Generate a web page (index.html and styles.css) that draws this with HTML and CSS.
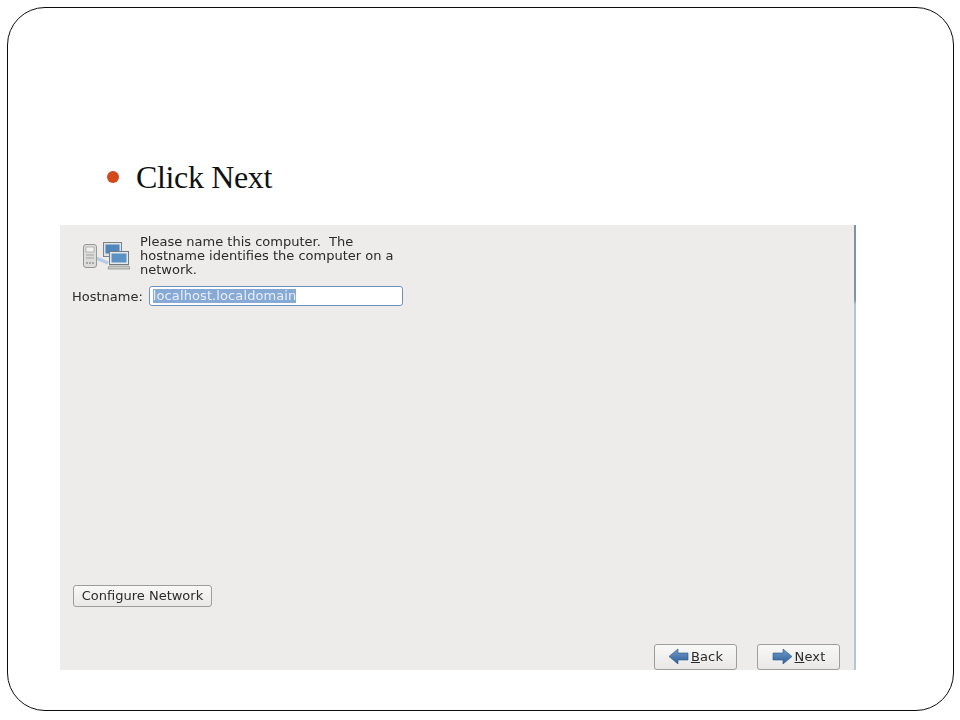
FILE: index.html
```html
<!DOCTYPE html>
<html lang="en">
<head>
<meta charset="utf-8">
<title>Click Next</title>
<link rel="stylesheet" href="styles.css">
</head>
<body>
<main class="slide">
  <ul class="bullets">
    <li class="bullet"><span class="dot"></span><span>Click Next</span></li>
  </ul>
  <section class="installer">
    <div class="content">
      <div class="intro">
        <svg class="net-icon" width="48" height="30" viewBox="0 0 48 30" aria-hidden="true">
          <path d="M14 17 L26 22" stroke="#b4cce6" stroke-width="3" fill="none"/>
          <rect x="1.5" y="3.5" width="13" height="23" rx="2.5" fill="#dcdcda" stroke="#979896"/>
          <rect x="4" y="6" width="8" height="5" fill="#f2f2f0" stroke="#a2a2a0" stroke-width=".7"/>
          <path d="M4 14h8M4 17h8" stroke="#a3a4a2"/>
          <path d="M4 22h2M7 22h2M10 22h2" stroke="#959694" stroke-width="1.5"/>
          <rect x="21.5" y="1.5" width="18" height="14" fill="#dfe3e6" stroke="#7c8386"/>
          <rect x="23.5" y="3.5" width="14" height="9" fill="#4f86bc"/>
          <rect x="27.5" y="10.5" width="19" height="13" fill="#e6e9eb" stroke="#747b7e"/>
          <rect x="29.5" y="12.5" width="15" height="9" fill="#5a92c6"/>
          <path d="M27 25h20l1 3H26z" fill="#c9cbc9" stroke="#868987" stroke-width=".7"/>
        </svg>
        <p class="intro-text">Please name this computer.&nbsp; The hostname identifies the computer on a network.</p>
      </div>
      <div class="host-row">
        <label class="host-label" for="host">Hostname:</label>
        <div class="host-input" id="host"><span class="selected">localhost.localdomain</span></div>
      </div>
      <div class="spacer"></div>
      <button class="btn btn-config" type="button">Configure Network</button>
    </div>
    <div class="nav">
      <button class="btn btn-nav" type="button">
        <svg width="21" height="17" viewBox="0 0 21 17" aria-hidden="true"><defs><linearGradient id="arrowBack" x1="0" y1="0" x2="0" y2="1"><stop offset="0" stop-color="#6f9ccc"/><stop offset="1" stop-color="#2f5f97"/></linearGradient></defs><path d="M1 8.5 L10 1 V5 H20 V12 H10 V16 Z" fill="url(#arrowBack)" stroke="#2c5688" stroke-width=".6"/></svg>
        <span class="nav-label"><u>B</u>ack</span>
      </button>
      <button class="btn btn-nav" type="button">
        <svg width="21" height="17" viewBox="0 0 21 17" aria-hidden="true"><defs><linearGradient id="arrowNext" x1="0" y1="0" x2="0" y2="1"><stop offset="0" stop-color="#6f9ccc"/><stop offset="1" stop-color="#2f5f97"/></linearGradient></defs><path d="M20 8.5 L11 1 V5 H1 V12 H11 V16 Z" fill="url(#arrowNext)" stroke="#2c5688" stroke-width=".6"/></svg>
        <span class="nav-label"><u>N</u>ext</span>
      </button>
    </div>
  </section>
</main>
</body>
</html>
```

FILE: styles.css
```css
* { box-sizing: border-box; }

html, body {
  margin: 0;
  height: 720px;
  background: #fff;
  overflow: hidden;
}

.slide {
  margin: 7px 6px 0 7px;
  width: 947px;
  height: 704px;
  border: 1.5px solid #0c0c0c;
  border-radius: 38px;
  padding-top: 148px;
  padding-left: 52px;
}

.bullets {
  list-style: none;
  margin: 0;
  padding: 0 0 0 47px;
}

.bullet {
  display: flex;
  align-items: center;
  gap: 17px;
  height: 42px;
  font-family: "Liberation Serif", "Times New Roman", serif;
  font-size: 32px;
  letter-spacing: -0.35px;
  color: #111;
}

.dot {
  width: 12px;
  height: 12px;
  border-radius: 50%;
  background: #d2491c;
}

.installer {
  margin-top: 27px;
  width: 796px;
  height: 445px;
  background: #edecea;
  border-right: 2px solid;
  border-image: linear-gradient(#7d94ac 0, #7d94ac 17%, #b3c6d9 18%, #b3c6d9 100%) 1;
  display: flex;
  flex-direction: column;
  font-family: "DejaVu Sans", sans-serif;
  font-size: 13px;
  color: #2a2a2a;
  filter: blur(0.35px);
}

.content {
  flex: 1;
  display: flex;
  flex-direction: column;
  padding: 10px 0 0 12px;
}

.intro {
  display: flex;
  align-items: center;
  gap: 10px;
  padding-left: 10px;
}

.intro-text {
  margin: 0;
  width: 262px;
  line-height: 14px;
}

.host-row {
  display: flex;
  align-items: center;
  gap: 6px;
  margin-top: 9px;
}

.host-input {
  width: 254px;
  height: 20px;
  background: #fff;
  border: 1.5px solid #6d92bd;
  border-radius: 3px;
  padding: 2px 3px;
  line-height: 14px;
}

.selected {
  background: #87a9d6;
  color: #e9eff7;
  display: inline-block;
  height: 14px;
  letter-spacing: 0.1px;
}

.spacer { flex: 1; }

.btn {
  display: inline-flex;
  align-items: center;
  justify-content: center;
  font: inherit;
  color: inherit;
  background: linear-gradient(#f8f8f7, #e9e8e6);
  border: 1px solid #9d9d9a;
  border-radius: 3px;
  padding: 0 0 2px;
}

.btn-config {
  width: 139px;
  height: 22px;
  margin-left: 1px;
  margin-bottom: 1px;
}

.nav {
  height: 62px;
  display: flex;
  justify-content: flex-end;
  gap: 20px;
  padding: 36px 14px 0 0;
}

.btn-nav {
  width: 83px;
  height: 26px;
  gap: 2px;
}

.btn-nav svg { flex: none; }

.nav-label { letter-spacing: 0.15px; }
```
